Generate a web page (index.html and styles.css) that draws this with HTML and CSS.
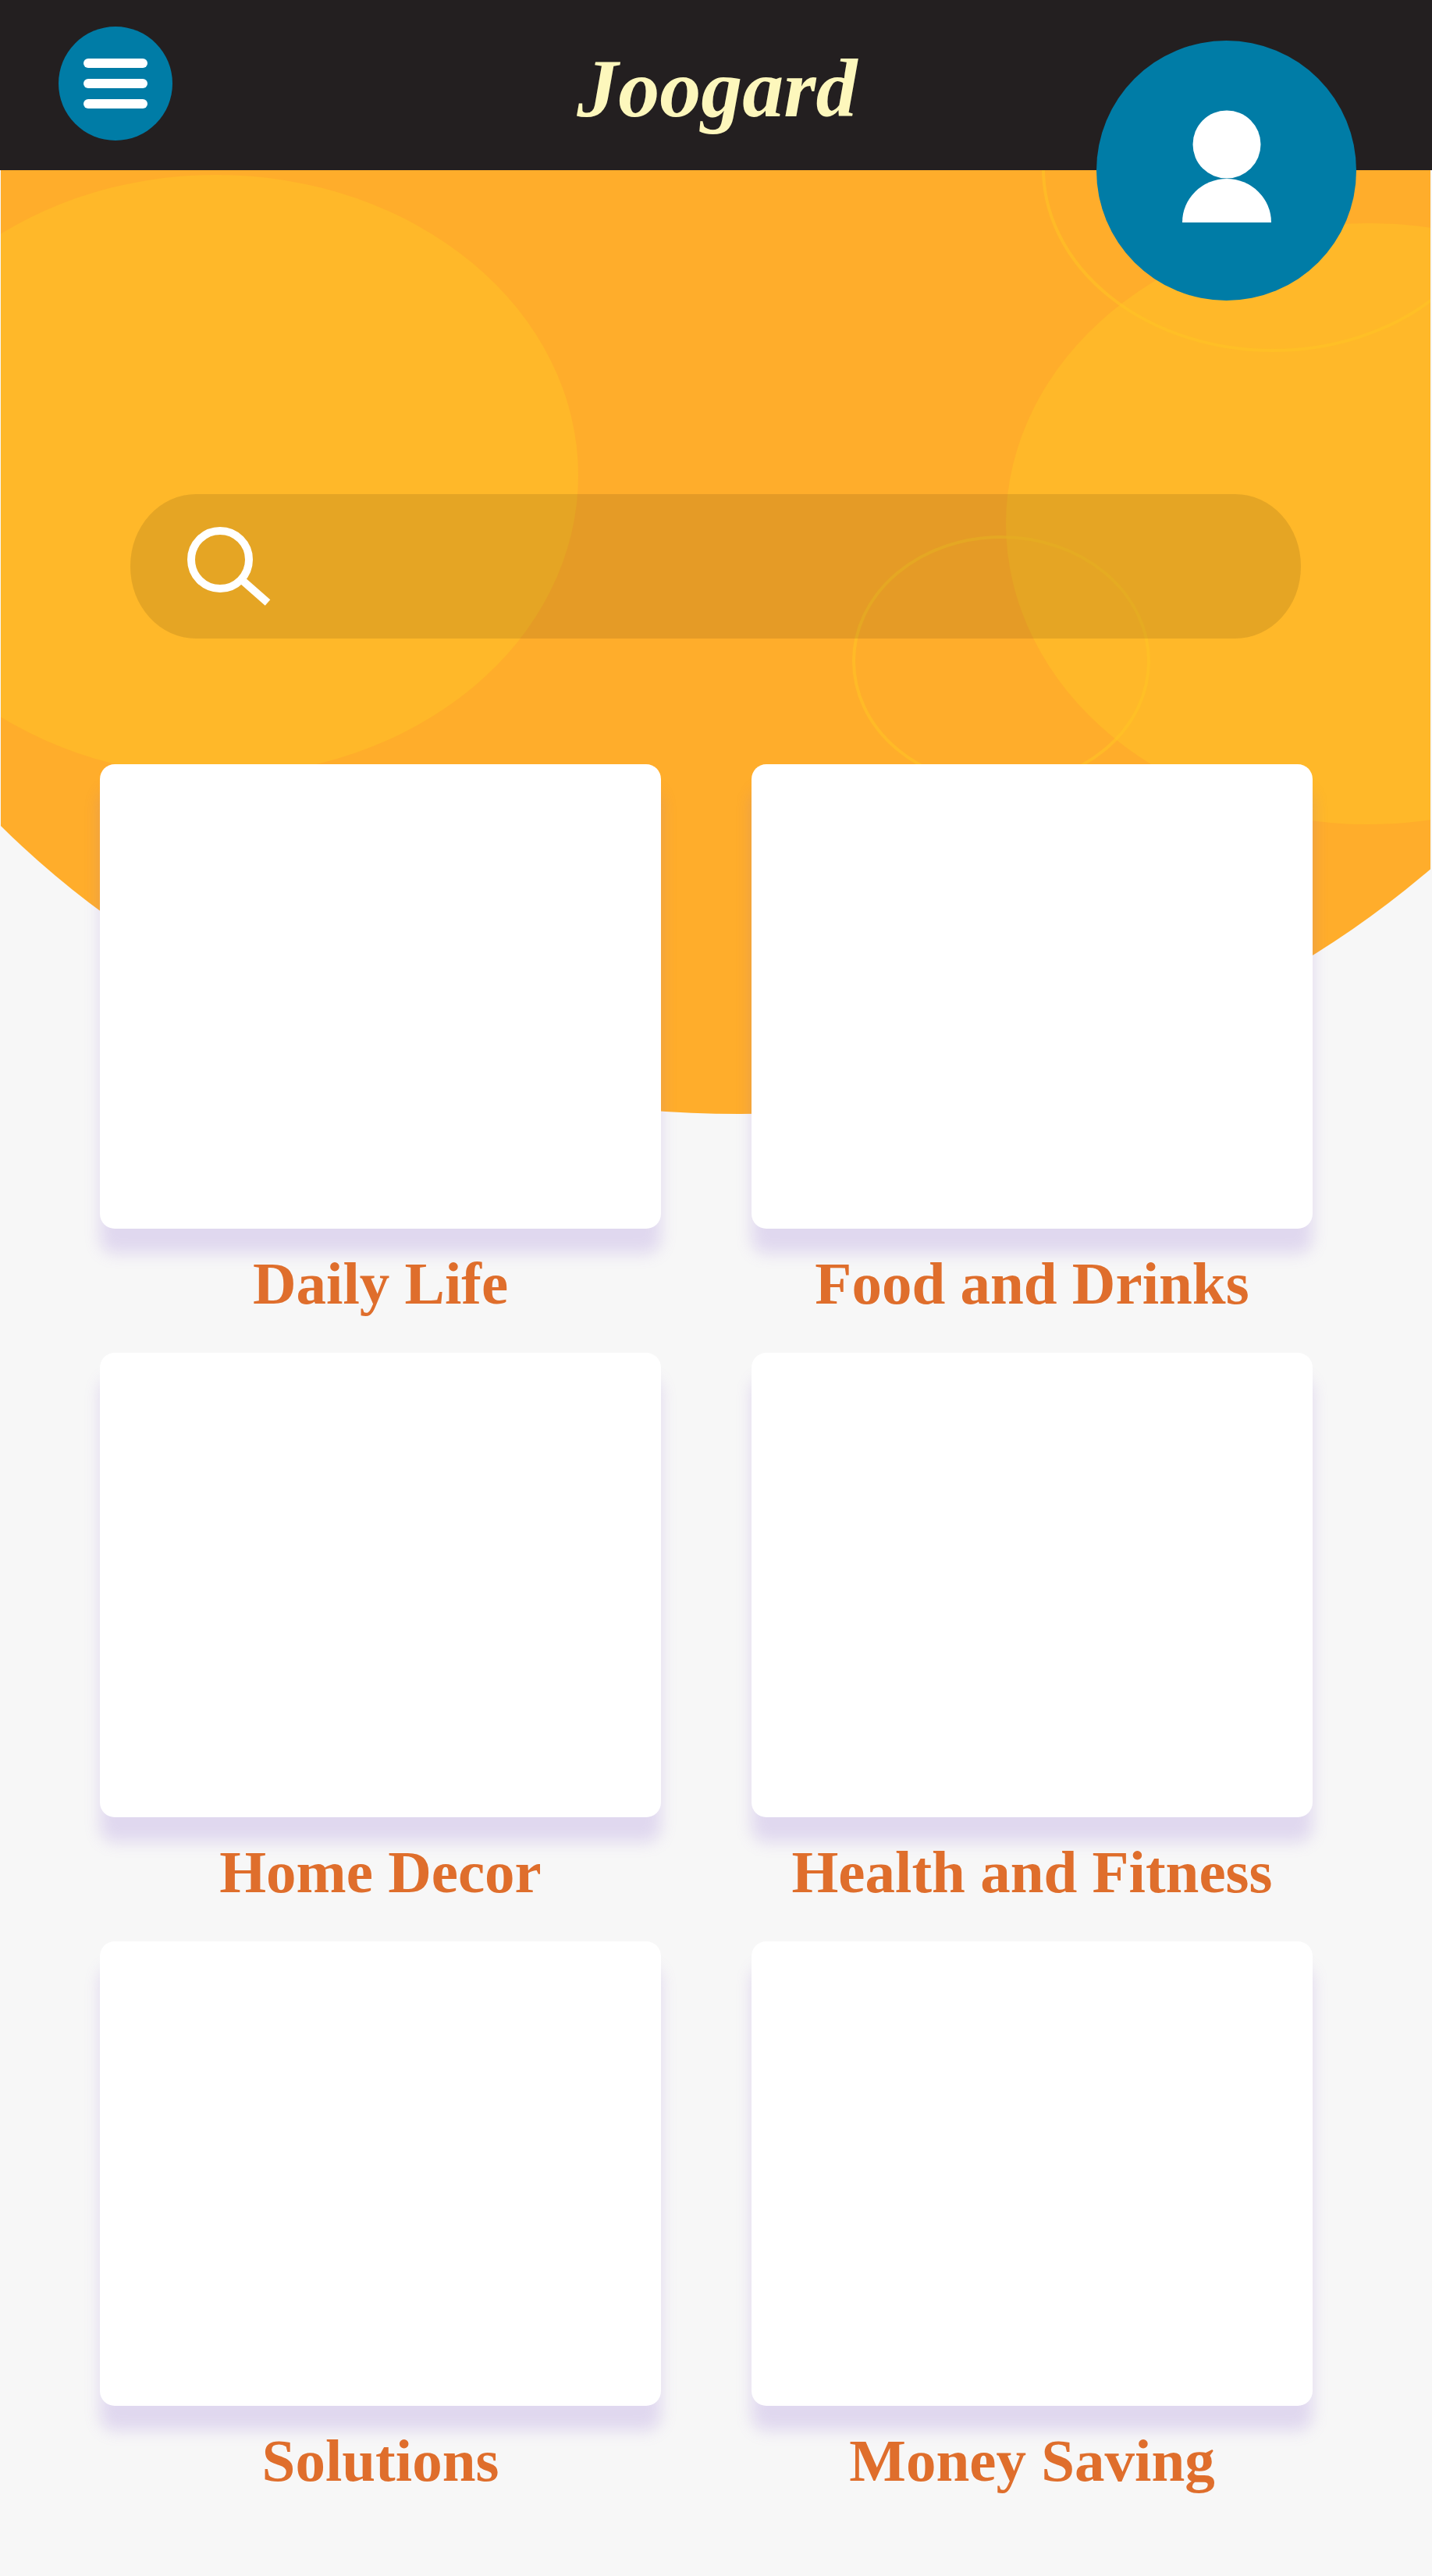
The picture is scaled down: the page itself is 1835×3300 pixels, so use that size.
FILE: index.html
```html
<!DOCTYPE html>
<html lang="en">
<head>
  <meta charset="utf-8">
  <meta name="viewport" content="width=device-width, initial-scale=1">
  <title>Joogard</title>
  <link rel="stylesheet" href="styles.css">
</head>
<body>
  <header class="topbar">
    <button class="menu" type="button" aria-label="Open menu">
      <span class="menu-bar"></span>
      <span class="menu-bar"></span>
      <span class="menu-bar"></span>
    </button>
    <a class="logo" href="#">Joogard</a>
    <a class="profile" href="#" aria-label="Profile">
      <svg class="profile-icon" viewBox="0 0 114 144" aria-hidden="true">
        <ellipse cx="57" cy="44" rx="43.5" ry="43.5"/>
        <path d="M0 144A57 56 0 0 1 114 144Z"/>
      </svg>
    </a>
  </header>

  <main class="content">
    <svg class="backdrop" viewBox="1 218 1832 1209" preserveAspectRatio="none" aria-hidden="true">
      <defs>
        <clipPath id="dome"><ellipse cx="947" cy="385" rx="1239" ry="1042"/></clipPath>
      </defs>
      <g clip-path="url(#dome)">
        <rect class="backdrop-base" x="1" y="218" width="1832" height="1209"/>
        <ellipse class="blob" cx="277" cy="609" rx="464" ry="385"/>
        <ellipse class="blob" cx="1753" cy="671" rx="464" ry="385"/>
        <ellipse class="ring" cx="1631" cy="216" rx="294" ry="233"/>
        <ellipse class="ring" cx="1283" cy="847" rx="189" ry="159"/>
      </g>
    </svg>

    <form class="search" role="search">
      <label class="search-label" for="query" aria-label="Search">
        <svg class="search-icon" viewBox="0 0 108 102" aria-hidden="true">
          <circle cx="42" cy="42" r="37"/>
          <path d="M70 68L103 97"/>
        </svg>
      </label>
      <input class="search-input" id="query" type="search">
    </form>

    <nav class="categories" aria-label="Categories">
      <a class="category" href="#"><span class="tile"></span><span class="name">Daily Life</span></a>
      <a class="category" href="#"><span class="tile"></span><span class="name">Food and Drinks</span></a>
      <a class="category" href="#"><span class="tile"></span><span class="name">Home Decor</span></a>
      <a class="category" href="#"><span class="tile"></span><span class="name">Health and Fitness</span></a>
      <a class="category" href="#"><span class="tile"></span><span class="name">Solutions</span></a>
      <a class="category" href="#"><span class="tile"></span><span class="name">Money Saving</span></a>
    </nav>
  </main>
</body>
</html>
```

FILE: styles.css
```css
*,
*::before,
*::after {
  box-sizing: border-box;
}

body {
  margin: 0;
  background: #f7f7f7;
  font-family: "Liberation Serif", "Times New Roman", serif;
}

a {
  color: inherit;
  text-decoration: none;
}

/* Top bar */

.topbar {
  position: relative;
  z-index: 1;
  display: grid;
  grid-template-columns: 1fr auto 1fr;
  align-items: start;
  min-height: 218px;
  padding: 0 72px 0 75px;
  background: #231f20;
}

.menu {
  display: flex;
  flex-direction: column;
  align-items: center;
  justify-content: center;
  gap: 14px;
  width: 146px;
  height: 146px;
  margin-top: 34px;
  padding: 0;
  border: 0;
  border-radius: 50%;
  background: #007ca6;
  cursor: pointer;
}

.menu-bar {
  width: 82px;
  height: 12px;
  border-radius: 6px;
  background: #fff;
}

.logo {
  margin-top: 54px;
  color: #fdf7bc;
  font-size: 106px;
  font-style: italic;
  font-weight: 700;
  line-height: 120px;
}

.profile {
  display: flex;
  align-items: center;
  justify-content: center;
  justify-self: end;
  width: 333px;
  height: 333px;
  margin: 52px 25px -168px 0;
  padding-bottom: 12px;
  border-radius: 50%;
  background: #007ca6;
}

.profile-icon {
  width: 114px;
  height: 144px;
  fill: #fff;
}

/* Page content over the orange dome */

.content {
  position: relative;
  padding: 415px 0 104px;
}

.backdrop {
  position: absolute;
  top: 0;
  left: 1px;
  width: calc(100% - 3px);
  height: 1209px;
}

.backdrop-base {
  fill: #ffad2b;
}

.blob {
  fill: #ffb829;
}

.ring {
  fill: none;
  stroke: rgba(255, 195, 37, 0.6);
  stroke-width: 4;
}

.search {
  position: relative;
  display: flex;
  align-items: center;
  gap: 32px;
  height: 185px;
  margin: 0 168px 161px 167px;
  padding: 0 73px;
  border-radius: 84px / 92px;
  background: rgba(0, 0, 0, 0.1);
}

.search-label {
  display: flex;
}

.search-icon {
  width: 108px;
  height: 102px;
  fill: none;
  stroke: #fff;
  stroke-width: 10;
}

.search-input {
  flex: 1;
  min-width: 0;
  height: 100px;
  padding: 0;
  border: 0;
  outline: 0;
  background: transparent;
  color: #fff;
  font: inherit;
  font-size: 64px;
}

/* Category grid */

.categories {
  position: relative;
  display: grid;
  grid-template-columns: 1fr 1fr;
  gap: 45px 116px;
  padding: 0 153px 0 128px;
}

.category {
  display: flex;
  flex-direction: column;
  gap: 26px;
}

.tile {
  aspect-ratio: 719 / 595;
  border-radius: 19px;
  background: #fff;
  box-shadow: 0 32px 20px rgba(147, 111, 215, 0.22);
}

.name {
  position: relative;
  color: #df6e2c;
  font-size: 77px;
  font-weight: 700;
  line-height: 88px;
  text-align: center;
}
```
